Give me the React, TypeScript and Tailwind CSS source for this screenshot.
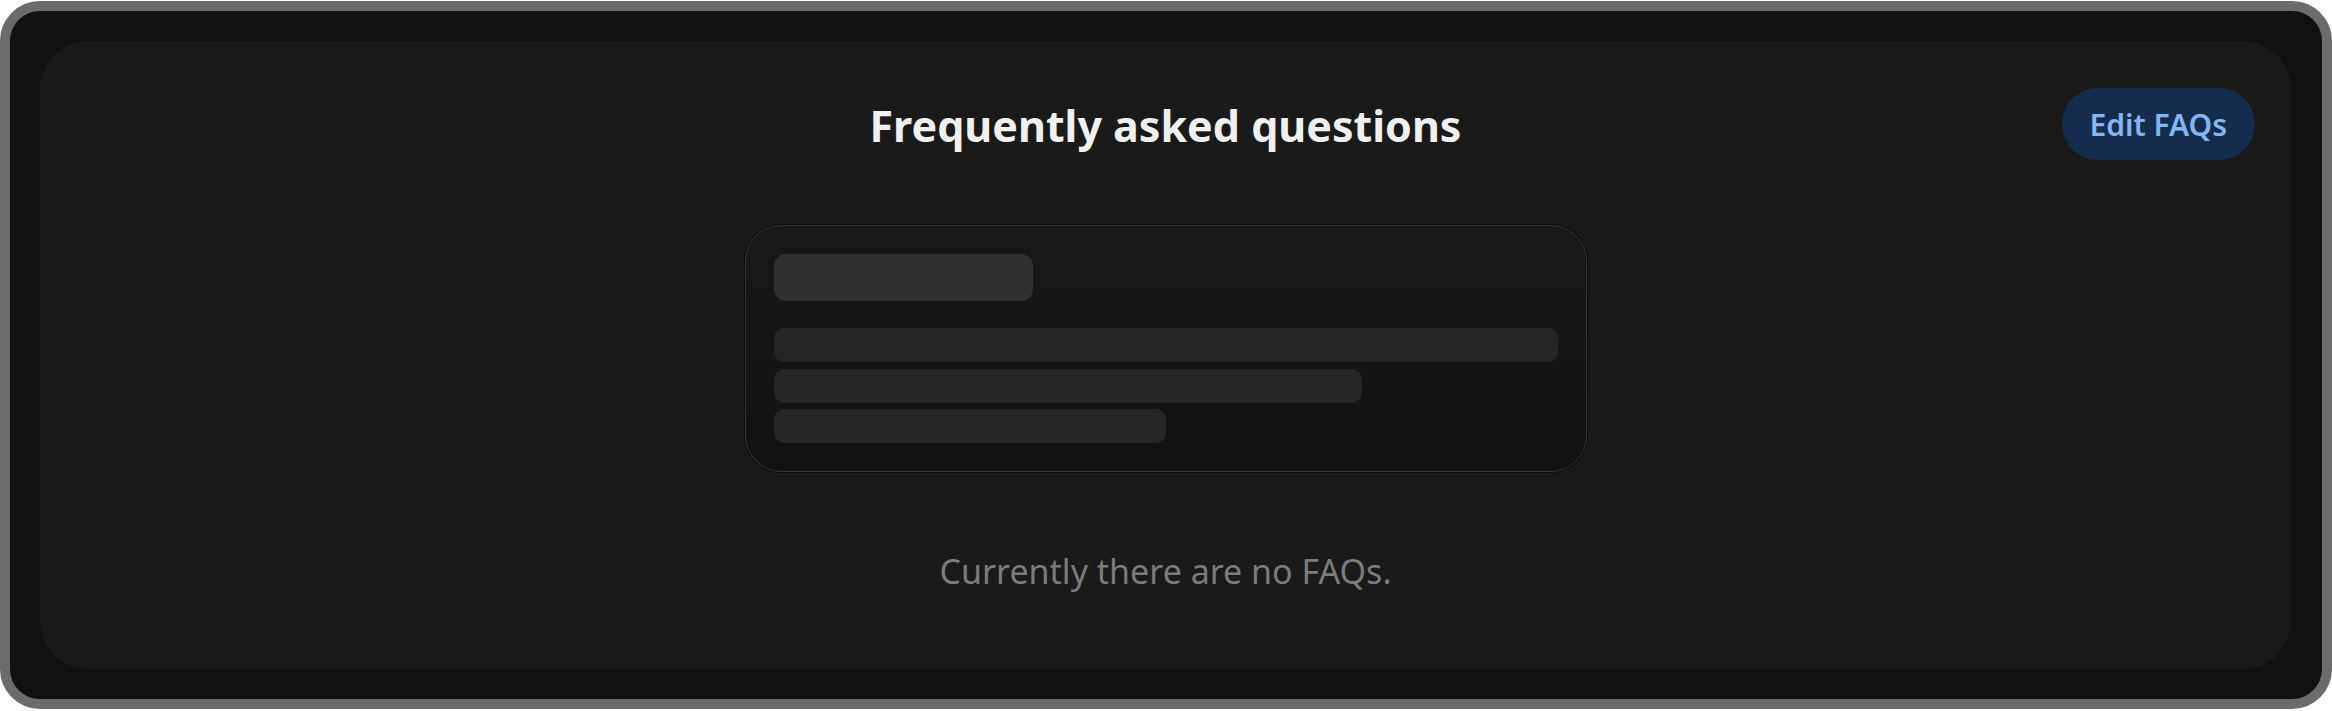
import React from "react";

export default function App() {
  return (
    <div className="w-[2332px] h-[711px] bg-white pt-px" style={{ fontFamily: '"Noto Sans", "Open Sans", sans-serif' }}>
      <div className="h-[708px] w-full rounded-[40px] border-[10px] border-[#6b6b6b] bg-[#111111] pt-[30px] pb-[30px] pl-[30px] pr-[31px]">
        <div className="h-full w-full rounded-[48px] bg-[#1a1a1a] flex flex-col items-center">
          <div className="grid w-full grid-cols-[1fr_auto_1fr] items-center pt-[47px]">
            <div />
            <h1 className="text-[43px] font-bold leading-[72px] text-[#f0f0f0] translate-y-[2px]">Frequently asked questions</h1>
            <div className="flex justify-end pr-[36px]">
              <button className="h-[72px] rounded-full bg-[#142d4f] px-[28px] text-[30px] font-semibold text-[#84b5f3]">
                Edit FAQs
              </button>
            </div>
          </div>
          <div className="mt-[65px] w-[842px] rounded-[36px] border border-[#363636] bg-gradient-to-b from-[#191919] to-[#131313] p-[28px] shadow-[0_0_0_1px_#0c0c0c]">
            <div className="h-[47px] w-[259px] rounded-[12px] bg-[#303030]" />
            <div className="mt-[27px] flex flex-col gap-[6.5px]">
              <div className="h-[34px] w-full rounded-[10px] bg-[#262626]" />
              <div className="h-[34px] w-[75%] rounded-[10px] bg-[#262626]" />
              <div className="h-[34px] w-[50%] rounded-[10px] bg-[#262626]" />
            </div>
          </div>
          <p className="mt-[76px] text-[34px] leading-[46px] text-[#7c7c7c]">Currently there are no FAQs.</p>
        </div>
      </div>
    </div>
  );
}
